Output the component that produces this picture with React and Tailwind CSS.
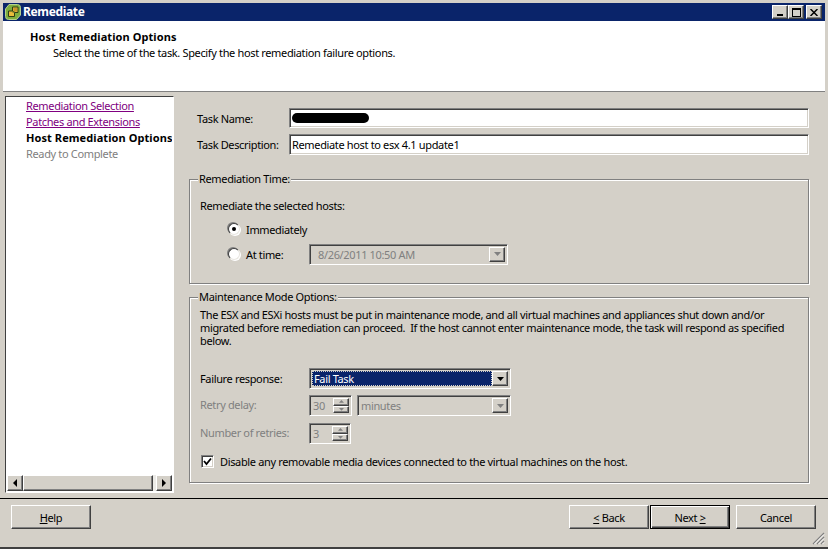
const font = { fontFamily: '"Noto Sans", Tahoma, sans-serif' };

const raised = "border border-t-white border-l-white border-r-[#404040] border-b-[#404040] shadow-[inset_-1px_-1px_0_#808080] bg-[#d4d0c8]";
const sunken = "border border-t-[#808080] border-l-[#808080] border-r-white border-b-white shadow-[inset_1px_1px_0_#404040,inset_-1px_-1px_0_#d4d0c8]";

function Arrow({ dir = "down", color = "#000", size = 7 }) {
  const pts = { down: "0,0 7,0 3.5,4", up: "0,4 7,4 3.5,0", left: "4,0 4,8 0,4", right: "0,0 0,8 4,4" }[dir];
  const vb = dir === "left" || dir === "right" ? "0 0 4 8" : "0 0 7 4";
  const w = dir === "left" || dir === "right" ? 4 : size;
  const h = dir === "left" || dir === "right" ? 8 : (size * 4) / 7;
  return (
    <svg width={w} height={h} viewBox={vb}>
      <polygon points={pts} fill={color} />
    </svg>
  );
}

function DropBtn({ disabled }) {
  return (
    <div className={`${raised} w-4 h-full flex items-center justify-center`}>
      <Arrow color={disabled ? "#808080" : "#000"} />
    </div>
  );
}

function Spin({ value, width }) {
  return (
    <div className={`${sunken} h-[21px] flex items-center p-[2px] ${width}`}>
      <span className="flex-1 pl-[1px] text-[#808080]">{value}</span>
      <div className="w-4 h-full flex flex-col">
        <div className={`${raised} flex-1 flex items-center justify-center`}><Arrow dir="up" size={5} color="#808080" /></div>
        <div className={`${raised} flex-1 flex items-center justify-center`}><Arrow dir="down" size={5} color="#808080" /></div>
      </div>
    </div>
  );
}

function Radio({ checked }) {
  return (
    <div className="w-3 h-3 rounded-full bg-white border border-t-[#404040] border-l-[#404040] border-r-[#e8e6e0] border-b-[#e8e6e0] shadow-[-1px_-1px_0_#808080,1px_1px_0_#fff] flex items-center justify-center">
      {checked && <div className="w-1 h-1 rounded-full bg-black" />}
    </div>
  );
}

function Group({ title, height, children }) {
  return (
    <div className={`relative border border-[#808080] shadow-[1px_1px_0_#fff,inset_1px_1px_0_#fff] ${height}`}>
      <span className="absolute left-[8px] top-[-8px] bg-[#d4d0c8] px-[1px] leading-[13px]">{title}</span>
      {children}
    </div>
  );
}

function Btn({ children, className = "" }) {
  return (
    <div className={`${raised} h-6 flex items-center justify-center ${className}`}>{children}</div>
  );
}

export default function App() {
  return (
    <div style={font} className="w-[828px] h-[549px] bg-[#d4d0c8] text-[11px] leading-[13px] tracking-[-0.35px] text-black flex flex-col pt-[3px] overflow-hidden relative border-b-2 border-b-[#404040]">
      <div className="ml-[3px] mr-[3px] h-[18px] bg-[#0a246a] flex items-center pl-[2px] pr-[3px] shrink-0">
        <svg width="16" height="16" viewBox="0 0 16 16" className="-mt-[1px]">
          <path d="M4 0.500h8.500a3 3 0 0 1 3 3V11l-4 4.500H3.500a3 3 0 0 1-3-3V5z" fill="#7fae3f" stroke="#b4d08c" />
          <path d="M7.500 3h5.500v5.500H9.500V12.500H3.500V7H7.500z" fill="#e9bc3c" stroke="#2f3f14" />
          <path d="M7.500 7H9.500V8.500H7.500z" fill="#3c5a20" />
          <path d="M8.500 4h3.500v3.500H8.500z" fill="#c9962a" />
        </svg>
        <span className="ml-[2px] -mt-[2px] font-bold text-white text-[12px] tracking-[-0.35px]">Remediate</span>
        <div className="ml-auto flex items-center">
          <div className={`${raised} w-4 h-[14px] flex items-end justify-center pb-[2px]`}><div className="w-[6px] h-[2px] bg-black" /></div>
          <div className={`${raised} w-4 h-[14px] flex items-center justify-center`}><div className="w-[9px] h-[9px] border border-black border-t-2" /></div>
          <div className={`${raised} w-4 h-[14px] ml-[2px] flex items-center justify-center`}>
            <svg width="8" height="7" viewBox="0 0 8 7"><path d="M0.500 0 L7.500 7 M7.500 0 L0.500 7" stroke="#000" strokeWidth="1.500" /></svg>
          </div>
        </div>
      </div>

      <div className="ml-[3px] mr-[3px] h-[71px] shrink-0 bg-white border-b border-b-[#808080] pl-[27px] pt-[9px]">
        <div className="font-bold tracking-[0.08px]">Host Remediation Options</div>
        <div className="ml-[23px] mt-[3px]">Select the time of the task. Specify the host remediation failure options.</div>
      </div>

      <div className="flex flex-1 min-h-0 pl-[5px] pt-[4px]">
        <div className={`w-[169px] h-[397px] bg-white flex flex-col p-[1px] border border-t-[#404040] border-l-[#404040] border-r-white border-b-white`}>
          <div className="flex-1 pl-[19px] whitespace-nowrap overflow-hidden">
            <div className="-mt-[1px] h-4 flex items-center text-[#800080] underline">Remediation Selection</div>
            <div className="h-4 flex items-center text-[#800080] underline">Patches and Extensions</div>
            <div className="h-4 flex items-center font-bold tracking-[0.08px]">Host Remediation Options</div>
            <div className="h-4 flex items-center text-[#808080]">Ready to Complete</div>
          </div>
          <div className="h-4 flex bg-[#ecebe7]">
            <div className={`${raised} w-4 flex items-center justify-center`}><Arrow dir="left" /></div>
            <div className={`${raised} w-[130px]`} />
            <div className="flex-1" />
            <div className={`${raised} w-4 flex items-center justify-center`}><Arrow dir="right" /></div>
          </div>
        </div>

        <div className="w-[620px] ml-[15px] pt-[12px]">
          <div className="flex items-center h-5">
            <span className="w-[92px] ml-[8px]">Task Name:</span>
            <div className={`${sunken} bg-white w-[520px] h-5 flex items-center pl-[2px]`}>
              <div className="w-[77px] h-[10px] bg-black rounded-full" />
            </div>
          </div>
          <div className="flex items-center h-[21px] mt-[6px]">
            <span className="w-[92px] ml-[8px]">Task Description:</span>
            <div className={`${sunken} bg-white w-[520px] h-[21px] flex items-center pl-[2px]`}>Remediate host to esx 4.1 update1</div>
          </div>

          <div className="mt-[24px]">
            <Group title="Remediation Time:" height="h-[105px]">
              <div className="pl-[10px] pt-[19px]">Remediate the selected hosts:</div>
              <div className="flex items-center pl-[38px] mt-[10px] h-[14px] gap-[6px]">
                <Radio checked />
                <span>Immediately</span>
              </div>
              <div className="flex items-center pl-[38px] mt-[7px] h-[22px]">
                <Radio />
                <span className="ml-[6px] w-[63px]">At time:</span>
                <div className={`${sunken} w-[199px] h-[21px] flex items-center p-[2px] pl-[8px] text-[#808080]`}>
                  <span className="flex-1">8/26/2011 10:50 AM</span>
                  <DropBtn disabled />
                </div>
              </div>
            </Group>
          </div>

          <div className="mt-[13px]">
            <Group title="Maintenance Mode Options:" height="h-[186px]">
              <div className="pl-[10px] pr-[10px] pt-[10px]">
                The ESX and ESXi hosts must be put in maintenance mode, and all virtual machines and appliances shut down and/or migrated before remediation can proceed.&nbsp; If the host cannot enter maintenance mode, the task will respond as specified below.
              </div>
              <div className="flex items-center pl-[10px] mt-[21px] h-[21px]">
                <span className="w-[109px]">Failure response:</span>
                <div className={`${sunken} w-[202px] h-[21px] flex items-center p-[2px]`}>
                  <div className="flex-1 h-full bg-[#0a246a] text-white outline-1 outline-dotted outline-offset-[-1px] outline-[#d4d0c8] pl-[2px] flex items-center">Fail Task</div>
                  <DropBtn />
                </div>
              </div>
              <div className="flex items-center pl-[10px] mt-[6px] h-[21px] text-[#808080]">
                <span className="w-[109px] pb-[2px]">Retry delay:</span>
                <Spin value="30" width="w-[43px]" />
                <div className={`${sunken} ml-[5px] w-[154px] h-[21px] flex items-center p-[2px] pl-[3px]`}>
                  <span className="flex-1">minutes</span>
                  <DropBtn disabled />
                </div>
              </div>
              <div className="flex items-center pl-[10px] mt-[7px] h-[21px] text-[#808080]">
                <span className="w-[109px] pb-[2px]">Number of retries:</span>
                <Spin value="3" width="w-[42px]" />
              </div>
              <div className="flex items-center pl-[11px] mt-[10px] h-[14px]">
                <div className={`${sunken} w-[13px] h-[13px] bg-white flex items-center justify-center`}>
                  <svg width="9" height="9" viewBox="0 0 9 9"><path d="M1 4 L3.500 7 L8 1.500" stroke="#000" strokeWidth="1.800" fill="none" /></svg>
                </div>
                <span className="ml-[6px]">Disable any removable media devices connected to the virtual machines on the host.</span>
              </div>
            </Group>
          </div>
        </div>
      </div>

      <div className="h-[49px] shrink-0 border-t border-t-black flex items-start pt-[6px] pl-[11px] pr-[12px]">
        <Btn className="w-[80px]"><span><span className="underline">H</span>elp</span></Btn>
        <Btn className="w-[80px] ml-auto"><span><span className="underline">&lt;</span> Back</span></Btn>
        <div className="w-[80px] h-6 ml-[1px] flex items-center justify-center bg-[#d4d0c8] border border-black shadow-[inset_1px_1px_0_#fff,inset_-1px_-1px_0_#404040,inset_-2px_-2px_0_#808080]"><span>Next <span className="underline">&gt;</span></span></div>
        <Btn className="w-[80px] ml-[6px]">Cancel</Btn>
      </div>

      <svg className="absolute right-[3px] bottom-[2px]" width="13" height="13" viewBox="0 0 13 13">
        <path d="M12 1 L1 12 M12 5 L5 12 M12 9 L9 12" stroke="#808080" strokeWidth="1.200" />
        <path d="M12 2.500 L2.500 12 M12 6.500 L6.500 12 M12 10.500 L10.500 12" stroke="#fff" strokeWidth="1" />
      </svg>
    </div>
  );
}
